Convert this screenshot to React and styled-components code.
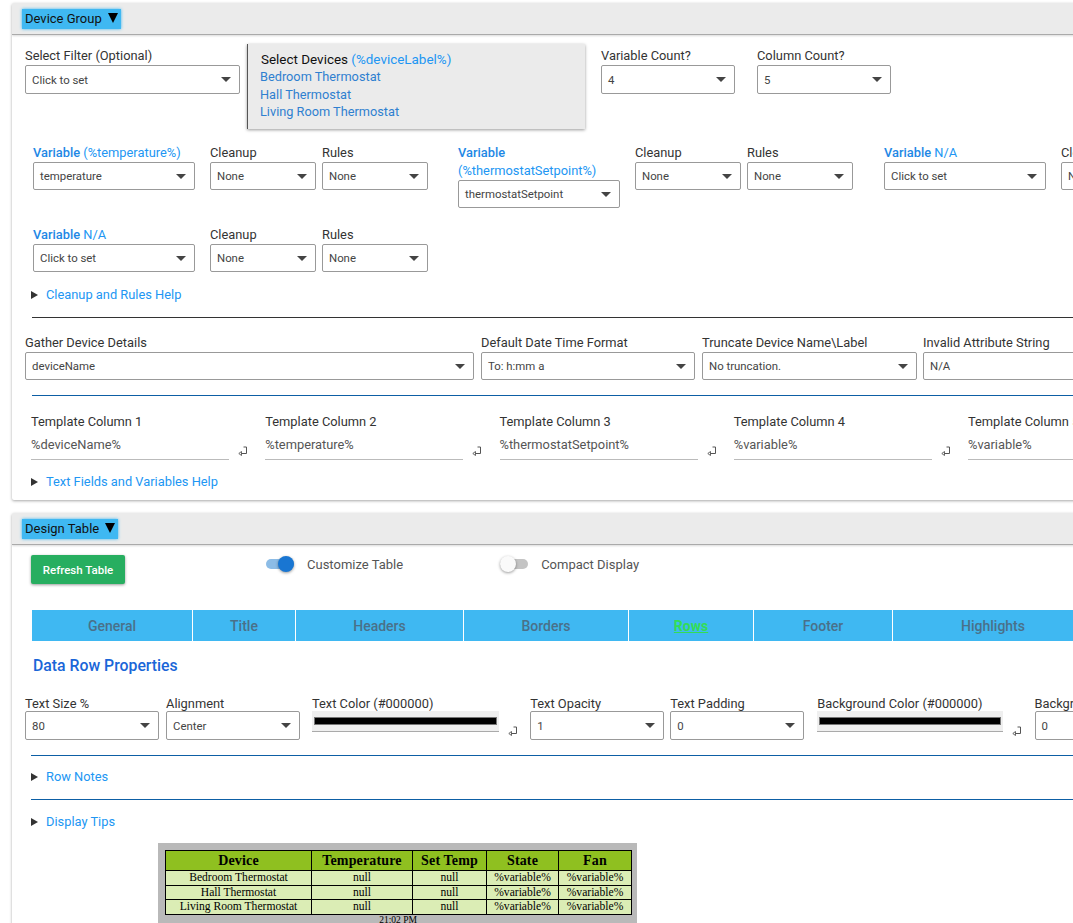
import React from "react";
import styled, { createGlobalStyle } from "styled-components";

const Global = createGlobalStyle`
  html, body { margin: 0; padding: 0; background: #fff; overflow: hidden; }
  body { width: 1073px; height: 923px; font-family: Roboto, "Liberation Sans", sans-serif; color: #333; }
  #root { width: 1073px; height: 923px; overflow: hidden; }
`;
const Page = styled.div`display:flex;flex-direction:column;gap:13px;padding:3px 0 0 12px;width:1300px;`;
const Card = styled.section`background:#fff;box-shadow:0 1px 3px rgba(0,0,0,.35);border-radius:2px;height:${p=>p.$h}px;overflow:hidden;`;
const Head = styled.div`height:31px;background:#ebebeb;border-bottom:1px solid #aaa;box-shadow:0 1px 2px rgba(0,0,0,.15);display:flex;align-items:center;padding-left:10px;`;
const HeadButton = styled.div`background:#3fb8f2;box-shadow:0 0 3px #3fb8f2;height:20px;padding:0 3px;display:flex;align-items:center;gap:6px;font-size:13px;color:#111;`;
const HeadTri = styled.span`width:0;height:0;border-left:5px solid transparent;border-right:5px solid transparent;border-top:10px solid #000;margin-top:-2px;`;
const Row = styled.div`display:flex;align-items:flex-start;`;
const Field = styled.div`width:${p=>p.$w}px;margin-left:${p=>p.$ml||0}px;flex:none;`;
const Label = styled.div`font-size:12.85px;line-height:18px;height:${p=>p.$lh||18}px;color:#333;white-space:${p=>p.$lh===36?"normal":"nowrap"};font-weight:400;`;
const Blue = styled.span`color:#2196f3;`;
const Strong = styled.span`color:#1e88e5;font-weight:500;`;
const SelectBox = styled.div`height:${p=>p.$h||29}px;box-sizing:border-box;border:1px solid #999;border-radius:2px;background:#fff;display:flex;align-items:center;justify-content:space-between;padding:0 7px 0 6px;font-size:11.4px;color:#444;`;
const Caret = styled.span`width:0;height:0;border-left:5px solid transparent;border-right:5px solid transparent;border-top:5px solid #444;margin-right:1px;`;
const Sel = ({ children, h }) => <SelectBox $h={h}><span>{children}</span><Caret /></SelectBox>;

const Top = styled(Row)`padding:8px 0 0 13px;height:109px;box-sizing:border-box;`;
const FilterField = styled(Field)`padding-top:4px;`;
const DeviceBox = styled.div`width:338px;height:85px;margin:1px 0 0 7px;box-sizing:border-box;flex:none;background:#ebebeb;border-left:1px solid #555;box-shadow:0 1px 3px rgba(0,0,0,.4);padding:7px 0 0 12px;font-size:12.75px;line-height:17.4px;`;
const DeviceTitle = styled.div`color:#111;padding-left:1px;font-size:13.45px;`;
const DeviceLine = styled.div`color:#2f80d0;`;
const CountField = styled(Field)`padding-top:4px;`;

const VarRow = styled(Row)`padding-left:21px;height:${p=>p.$h}px;`;
const Help = styled.div`display:flex;align-items:center;gap:8px;font-size:12.85px;color:#2196f3;line-height:18px;padding-left:19px;`;
const HelpTri = styled.span`width:0;height:0;border-top:4.5px solid transparent;border-bottom:4.5px solid transparent;border-left:7px solid #333;`;
const Rule = styled.div`height:1px;background:${p=>p.$c};margin:${p=>p.$m};`;
const GatherRow = styled(Row)`padding-left:13px;height:61px;`;
const TemplateRow = styled(Row)`padding-left:19px;margin-top:17px;height:60px;`;
const TemplateField = styled.div`width:198px;flex:none;`;
const TemplateInput = styled.div`height:30px;box-sizing:border-box;border-bottom:1px solid #bbb;font-size:12.85px;color:#555;padding-top:7px;margin-top:-1px;`;
const ReturnHolder = styled.div`width:36.25px;flex:none;display:flex;justify-content:center;padding:${p=>p.$pt||33}px 8px 0 0;box-sizing:border-box;`;
const Ret = () => <svg width="10" height="11" viewBox="0 0 10 11"><path d="M5.5 1H8.5V7.5H3.5" fill="none" stroke="#555" strokeWidth="1"/><path d="M3.5 5.5L0.8 7.5L3.5 9.5Z" fill="none" stroke="#555" strokeWidth=".9"/></svg>;

const Controls = styled(Row)`padding-left:19px;height:52px;padding-top:10px;box-sizing:border-box;`;
const RefreshBtn = styled.div`width:94px;height:29px;background:#27ae60;color:#fff;border-radius:2px;font-size:11.5px;font-weight:500;display:flex;align-items:center;justify-content:center;box-shadow:0 1px 3px rgba(0,0,0,.4);flex:none;`;
const ToggleWrap = styled.div`display:flex;align-items:center;gap:13px;margin-left:${p=>p.$ml}px;height:18px;font-size:13px;color:#555;`;
const Track = styled.div`width:28px;height:10px;border-radius:5px;background:${p=>p.$on?"#8cbce6":"#c4c4c4"};display:flex;align-items:center;justify-content:${p=>p.$on?"flex-end":"flex-start"};`;
const Thumb = styled.div`width:16px;height:16px;border-radius:50%;background:${p=>p.$on?"#1976d2":"#fafafa"};box-shadow:0 1px 3px rgba(0,0,0,.4);`;
const Tabs = styled.div`display:flex;margin:13px 0 0 20px;height:31px;gap:1px;`;
const Tab = styled.div`width:${p=>p.$w}px;flex:none;background:#3fb8f2;color:${p=>p.$active?"#33dd55":"#4a7089"};font-size:14px;font-weight:${p=>p.$active?700:500};display:flex;align-items:center;justify-content:center;text-decoration:${p=>p.$active?"underline":"none"};`;
const Title = styled.div`font-size:15.8px;font-weight:500;color:#1a66d8;margin:15px 0 0 21px;line-height:20px;`;
const PropRow = styled(Row)`padding-left:13px;margin-top:19px;height:60px;`;
const ColorWell = styled.div`height:21px;box-sizing:border-box;background:#efefef;border-bottom:1px solid #aaa;padding:6px 2px 0;`;
const ColorBar = styled.div`height:8px;background:#000;border:1px solid #777;box-sizing:border-box;`;
const PreviewWrap = styled.div`margin:12px 0 0 146px;width:479px;height:90px;background:#b9b9b9;box-sizing:border-box;padding:7px 6px 0 7px;font-family:"Liberation Serif",serif;color:#000;`;
const Preview = styled.table`border-collapse:collapse;width:466px;table-layout:fixed;`;
const Th = styled.th`box-sizing:border-box;background:#8fc020;border:1px solid #000;font-size:14px;height:20px;padding:0;letter-spacing:.15px;width:${p=>p.$w}px;`;
const Td = styled.td`box-sizing:border-box;background:#dbedb5;border:1px solid #000;font-size:11.6px;height:14.6px;line-height:13px;padding:0;text-align:center;`;
const Time = styled.div`text-align:center;font-size:9.5px;line-height:11px;`;

const Var = ({ name, two, sel, ml }) => (
  <>
    <Field $w={162} $ml={ml}>
      <Label $lh={two ? 36 : 18}><Strong>Variable</Strong> <Blue>{name}</Blue></Label>
      <Sel h={28}>{sel}</Sel>
    </Field>
    <Field $w={106} $ml={15}><Label>Cleanup</Label><Sel h={28}>None</Sel></Field>
    <Field $w={106} $ml={6}><Label>Rules</Label><Sel h={28}>None</Sel></Field>
  </>
);

const rows = ["Bedroom Thermostat", "Hall Thermostat", "Living Room Thermostat"];

export default function App() {
  return (
    <Page>
      <Global />
      <Card $h={497}>
        <Head><HeadButton>Device Group <HeadTri /></HeadButton></Head>
        <Top>
          <FilterField $w={215}><Label>Select Filter (Optional)</Label><Sel>Click to set</Sel></FilterField>
          <DeviceBox>
            <DeviceTitle>Select Devices <Blue>(%deviceLabel%)</Blue></DeviceTitle>
            {rows.map(r => <DeviceLine key={r}>{r}</DeviceLine>)}
          </DeviceBox>
          <CountField $w={134} $ml={16}><Label>Variable Count?</Label><Sel>4</Sel></CountField>
          <CountField $w={134} $ml={22}><Label>Column Count?</Label><Sel>5</Sel></CountField>
        </Top>
        <VarRow $h={82}>
          <Var name="(%temperature%)" sel="temperature" />
          <Var name="(%thermostatSetpoint%)" two sel="thermostatSetpoint" ml={30} />
          <Var name="N/A" sel="Click to set" ml={31} />
        </VarRow>
        <VarRow $h={60}>
          <Var name="N/A" sel="Click to set" />
        </VarRow>
        <Help><HelpTri />Cleanup and Rules Help</Help>
        <Rule $c="#333" $m="13px 0 16px 20px" />
        <GatherRow>
          <Field $w={449}><Label>Gather Device Details</Label><Sel h={28}>deviceName</Sel></Field>
          <Field $w={214} $ml={7}><Label>Default Date Time Format</Label><Sel h={28}>To: h:mm a</Sel></Field>
          <Field $w={215} $ml={7}><Label>Truncate Device Name\Label</Label><Sel h={28}>No truncation.</Sel></Field>
          <Field $w={215} $ml={6}><Label>Invalid Attribute String</Label><Sel h={28}>N/A</Sel></Field>
        </GatherRow>
        <Rule $c="#0d5fa5" $m="0 0 0 20px" />
        <TemplateRow>
          {[["1","%deviceName%"],["2","%temperature%"],["3","%thermostatSetpoint%"],["4","%variable%"],["5","%variable%"]].map(([n,v]) => (
            <React.Fragment key={n}>
              <TemplateField><Label>Template Column {n}</Label><TemplateInput>{v}</TemplateInput></TemplateField>
              <ReturnHolder><Ret /></ReturnHolder>
            </React.Fragment>
          ))}
        </TemplateRow>
        <Help><HelpTri />Text Fields and Variables Help</Help>
      </Card>
      <Card $h={480}>
        <Head><HeadButton>Design Table <HeadTri /></HeadButton></Head>
        <Controls>
          <RefreshBtn>Refresh Table</RefreshBtn>
          <ToggleWrap $ml={141}><Track $on><Thumb $on /></Track>Customize Table</ToggleWrap>
          <ToggleWrap $ml={97}><Track><Thumb /></Track>Compact Display</ToggleWrap>
        </Controls>
        <Tabs>
          <Tab $w={160}>General</Tab><Tab $w={102}>Title</Tab><Tab $w={167}>Headers</Tab><Tab $w={164}>Borders</Tab>
          <Tab $w={124} $active>Rows</Tab><Tab $w={138}>Footer</Tab><Tab $w={200}>Highlights</Tab>
        </Tabs>
        <Title>Data Row Properties</Title>
        <PropRow>
          <Field $w={134}><Label $lh={16}>Text Size %</Label><Sel>80</Sel></Field>
          <Field $w={134} $ml={7}><Label $lh={16}>Alignment</Label><Sel>Center</Sel></Field>
          <Field $w={187} $ml={12}><Label $lh={16}>Text Color (#000000)</Label><ColorWell><ColorBar /></ColorWell></Field>
          <ReturnHolder $pt={31}><Ret /></ReturnHolder>
          <Field $w={134} $ml={-5}><Label $lh={16}>Text Opacity</Label><Sel>1</Sel></Field>
          <Field $w={134} $ml={6}><Label $lh={16}>Text Padding</Label><Sel>0</Sel></Field>
          <Field $w={186} $ml={13}><Label $lh={16}>Background Color (#000000)</Label><ColorWell><ColorBar /></ColorWell></Field>
          <ReturnHolder $pt={31}><Ret /></ReturnHolder>
          <Field $w={134} $ml={-5}><Label $lh={16}>Background Opacity</Label><Sel>0</Sel></Field>
        </PropRow>
        <Rule $c="#0d5fa5" $m="0 0 12px 19px" />
        <Help><HelpTri />Row Notes</Help>
        <Rule $c="#0d5fa5" $m="13px 0 13px 19px" />
        <Help><HelpTri />Display Tips</Help>
        <PreviewWrap>
          <Preview>
            <thead><tr><Th $w={146}>Device</Th><Th $w={101}>Temperature</Th><Th $w={74}>Set Temp</Th><Th $w={72}>State</Th><Th $w={73}>Fan</Th></tr></thead>
            <tbody>{rows.map(r => <tr key={r}><Td>{r}</Td><Td>null</Td><Td>null</Td><Td>%variable%</Td><Td>%variable%</Td></tr>)}</tbody>
          </Preview>
          <Time>21:02 PM</Time>
        </PreviewWrap>
      </Card>
    </Page>
  );
}
